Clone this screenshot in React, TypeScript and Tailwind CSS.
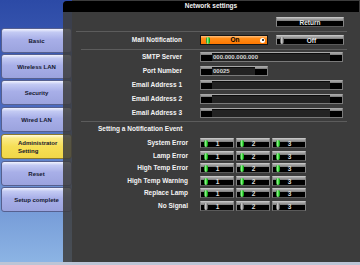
const sideItems = [
  { label: "Basic", mt: "mt-0" },
  { label: "Wireless LAN", mt: "mt-[1px]" },
  { label: "Security", mt: "mt-[1px]" },
  { label: "Wired LAN", mt: "mt-[2px]" },
  { label: "Administrator Setting", mt: "mt-[2px]", active: true },
  { label: "Reset", mt: "mt-[2px]" },
  { label: "Setup complete", mt: "mt-[1px]" },
]

const fields = [
  { label: "SMTP Server", value: "000.000.000.000", wide: true },
  { label: "Port Number", value: "00025", wide: false },
  { label: "Email Address 1", value: "", wide: true },
  { label: "Email Address 2", value: "", wide: true },
  { label: "Email Address 3", value: "", wide: true },
]

const events = [
  { label: "System Error", on: true, mt: "mt-0" },
  { label: "Lamp Error", on: true, mt: "mt-[3px]" },
  { label: "High Temp Error", on: true, mt: "mt-[2px]" },
  { label: "High Temp Warning", on: true, mt: "mt-[3px]" },
  { label: "Replace Lamp", on: true, mt: "mt-[2px]" },
  { label: "No Signal", on: false, mt: "mt-[3px]" },
]

// grey bevelled black key used by Return / Off / event switches
const keyCls =
  "border border-[#858585] border-t-[#c4c4c4] border-b-[#5a5a5a] bg-[linear-gradient(to_bottom,#b4b4b4_0,#7a7a7a_3px,#000_3px)]"

function Led({ on }: { on: boolean }) {
  return (
    <span
      className={
        on
          ? "mt-[1px] h-[7px] w-[4px] shrink-0 rounded-full bg-[linear-gradient(to_right,#0a7a0a,#a4ffa4_45%,#1fd21f_70%,#0a8a0a)]"
          : "mt-[1px] h-[7px] w-[4px] shrink-0 rounded-full bg-[linear-gradient(to_right,#444,#e0e0e0_45%,#8a8a8a_70%,#444)]"
      }
    />
  )
}

function SideButton({ label, mt, active }: { label: string; mt: string; active?: boolean }) {
  if (active) {
    return (
      <div className={`${mt} ml-[1px] flex h-[25px] w-[71px] flex-col items-start justify-center rounded-[3px] border border-[#8c7a2a] bg-[linear-gradient(to_bottom,#fffbe2_0%,#fbeb86_14%,#f6df56_50%,#f1d748_100%)] pl-[16px] text-[6px] leading-[8px] font-bold text-[#15152a]`}>
        <span>Administrator</span>
        <span>Setting</span>
      </div>
    )
  }
  return (
    <div className={`${mt} ml-[1px] flex h-[25px] w-[71px] items-center justify-center rounded-[3px] border border-[#56608f] bg-[linear-gradient(to_bottom,#f2f4ff_0%,#c3caf3_14%,#a8afe8_45%,#9ba3de_100%)] text-[6px] leading-none font-bold text-[#15182f]`}>
      {label}
    </div>
  )
}

function Field({ value, wide }: { value: string; wide: boolean }) {
  return (
    <div className={`flex h-[10px] ${wide ? "w-[143px]" : "w-[68px]"} border border-[#7a7a7a] border-t-[#a8a8a8] bg-[#232323]`}>
      <div className="w-[11px] bg-[linear-gradient(to_bottom,#a8a8a8_0,#787878_2px,#000_2px)]" />
      <div className="flex flex-1 items-center pl-[1px] text-[6px] leading-none font-bold text-[#d6d6d6] shadow-[inset_0_1px_0_#0c0c0c]">
        {value}
      </div>
      <div className="w-[12px] bg-[linear-gradient(to_bottom,#a8a8a8_0,#787878_2px,#000_2px)]" />
    </div>
  )
}

function EventButton({ n, on }: { n: number; on: boolean }) {
  return (
    <div className={`flex h-[10px] w-[34px] items-center ${keyCls} pl-[3px]`}>
      <Led on={on} />
      <span className="flex-1 pt-[2px] pr-[6px] text-center text-[6.5px] leading-none font-bold text-[#dcdcdc]">{n}</span>
    </div>
  )
}

export default function App() {
  return (
    <div className="flex h-[265px] w-[360px] flex-col bg-[#bcc5d6] font-['Liberation_Sans',Arial,sans-serif]">
      <div className="flex h-[262px] bg-[#3c3c3c]">
        <aside className="flex w-[72px] shrink-0 flex-col bg-[linear-gradient(to_bottom,#2c4aa6_0%,#4a6abf_40%,#8cb4e4_100%)] pt-[28px]">
          {sideItems.map((s) => (
            <SideButton key={s.label} {...s} />
          ))}
        </aside>

        <main className="relative mt-[1px] -ml-[9px] flex h-[261px] w-[296px] flex-col rounded-tl-[4px] bg-[#3c3c3c]/[0.86] text-[#f4f4f4]">
          <div className="flex h-[11px] items-center justify-center rounded-tl-[4px] bg-black text-[6.5px] leading-none font-bold">
            Network settings
          </div>

          <div className="mt-[5px] flex justify-end pr-[15px]">
            <div className={`flex h-[10px] w-[68px] items-center justify-center ${keyCls} pt-[2px] text-[6.5px] leading-none font-bold text-[#e4e4e4]`}>
              Return
            </div>
          </div>

          <div className="mt-[4px] mr-[12px] ml-[13px] h-px bg-[#5c5c5c]" />

          <div className="mt-[3px] flex h-[10px] items-center">
            <span className="w-[119px] text-right text-[6.5px] leading-none font-bold">Mail Notification</span>
            <div className="ml-[18px] flex h-[10px] w-[68px] items-center border border-[#151515] bg-[linear-gradient(to_bottom,#ffc080_0,#ff8d1a_30%,#ff7800_100%)] pr-[2px] pl-[5px]">
              <Led on />
              <span className="flex-1 pt-[1px] text-center text-[6.5px] leading-none font-bold text-black">On</span>
              <span className="flex h-[5px] w-[5px] items-center justify-center rounded-full bg-white">
                <span className="h-[2px] w-[2px] rounded-full bg-black" />
              </span>
            </div>
            <div className={`ml-[8px] flex h-[10px] w-[68px] items-center ${keyCls} pl-[3px]`}>
              <Led on={false} />
              <span className="flex-1 pt-[2px] pr-[4px] text-center text-[6.5px] leading-none font-bold text-[#e4e4e4]">Off</span>
            </div>
          </div>

          <div className="mt-[4px] mr-[12px] ml-[18px] h-px bg-[#5c5c5c]" />

          <div className="mt-[2px] flex flex-col gap-[4px]">
            {fields.map((f) => (
              <div key={f.label} className="flex h-[10px] items-center">
                <span className="w-[119px] text-right text-[6.5px] leading-none font-bold">{f.label}</span>
                <div className="ml-[18px]">
                  <Field value={f.value} wide={f.wide} />
                </div>
              </div>
            ))}
          </div>

          <div className="mt-[3px] mr-[12px] ml-[18px] h-px bg-[#5c5c5c]" />

          <div className="mt-[3px] flex h-[8px] items-center pl-[35px] text-[6.5px] leading-none font-bold">
            Setting a Notification Event
          </div>

          <div className="mt-[5px] flex flex-col">
            {events.map((e) => (
              <div key={e.label} className={`${e.mt} flex h-[10px] items-center`}>
                <span className="w-[125px] text-right text-[6.5px] leading-none font-bold">{e.label}</span>
                <div className="ml-[12px] flex gap-[2px]">
                  <EventButton n={1} on={e.on} />
                  <EventButton n={2} on={e.on} />
                  <EventButton n={3} on={e.on} />
                </div>
              </div>
            ))}
          </div>
        </main>
      </div>
    </div>
  )
}
